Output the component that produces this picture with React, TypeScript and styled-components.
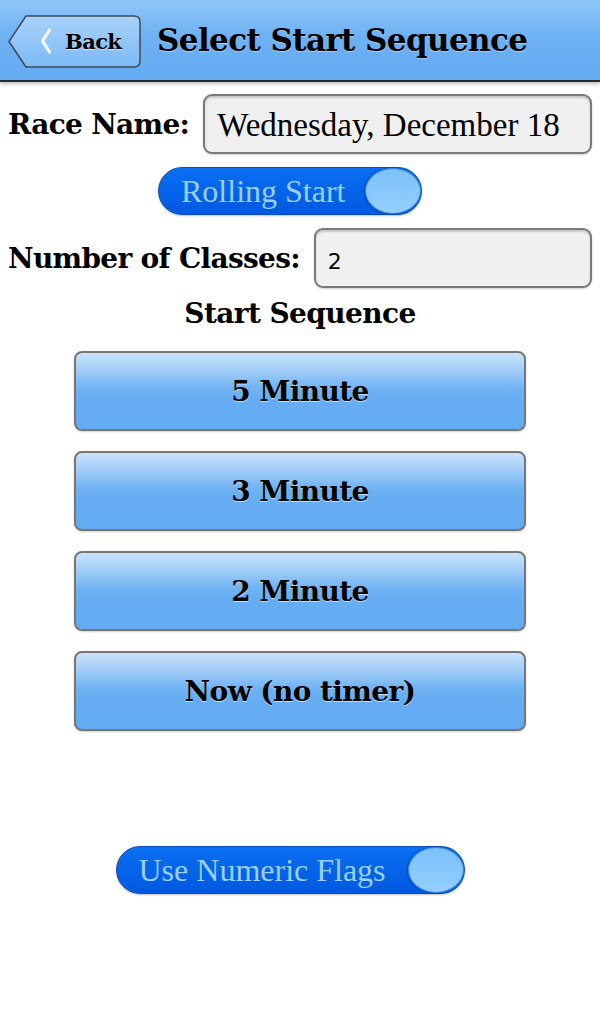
import React from "react";
import styled, { createGlobalStyle } from "styled-components";

const GlobalStyle = createGlobalStyle`
  html, body {
    margin: 0;
    padding: 0;
    background: #ffffff;
  }
  body {
    font-family: "DejaVu Serif", "Liberation Serif", serif;
    color: #000;
  }
`;

const Screen = styled.div`
  width: 600px;
  min-height: 1024px;
  background: #fff;
`;

const Header = styled.header`
  height: 80px;
  display: flex;
  align-items: center;
  gap: 16px;
  padding: 0 8px;
  background: linear-gradient(#8fc6f8 0%, #6eb1f3 45%, #63abf2 100%);
  border-bottom: 2px solid #2a2a2a;
  box-shadow: 0 2px 4px rgba(0, 0, 0, 0.25);
  position: relative;
`;

const BackButton = styled.button`
  position: relative;
  height: 53px;
  width: 133px;
  margin-top: 2px;
  border: none;
  background: none;
  padding: 0;
  cursor: pointer;
  display: flex;
  align-items: center;
`;

const BackFrame = styled.svg`
  position: absolute;
  left: 0;
  top: 0;
`;

const BackLabel = styled.span`
  position: relative;
  display: flex;
  align-items: center;
  gap: 13px;
  padding-left: 31px;
  font-family: "DejaVu Serif", serif;
  font-weight: bold;
  font-size: 21px;
  letter-spacing: -0.6px;
  color: #000;
  text-shadow: 0 1px 0 rgba(255, 255, 255, 0.5);
`;

const Title = styled.h1`
  margin: 0;
  font-size: 31px;
  font-weight: bold;
  letter-spacing: -0.6px;
  text-shadow: 0 1px 0 rgba(255, 255, 255, 0.4);
`;

const Body = styled.main`
  display: flex;
  flex-direction: column;
  padding: 12px 8px 0;
`;

const FieldRow = styled.div`
  display: flex;
  align-items: center;
  gap: 14px;
`;

const Label = styled.label`
  font-size: 28px;
  font-weight: bold;
  letter-spacing: -0.7px;
  white-space: nowrap;
`;

const TextBox = styled.div<{ $sans?: boolean }>`
  flex: 1;
  height: 60px;
  box-sizing: border-box;
  display: flex;
  align-items: center;
  padding: 0 12px;
  background: #f0f0f0;
  border: 2px solid #7a7a7a;
  border-radius: 9px;
  box-shadow: inset 0 2px 2px rgba(0, 0, 0, 0.18), 0 1px 2px rgba(0, 0, 0, 0.2);
  font-family: ${(p) => (p.$sans ? '"DejaVu Sans", sans-serif' : '"Liberation Serif", serif')};
  font-size: ${(p) => (p.$sans ? 22 : 33)}px;
  padding-top: ${(p) => (p.$sans ? 6 : 2)}px;
`;

const ToggleRow = styled.div<{ $top: number; $bottom: number }>`
  display: flex;
  justify-content: center;
  padding-right: 20px;
  margin: ${(p) => p.$top}px 0 ${(p) => p.$bottom}px;
`;

const Toggle = styled.div<{ $width: number }>`
  width: ${(p) => p.$width}px;
  height: 48px;
  box-sizing: border-box;
  display: flex;
  align-items: center;
  justify-content: space-between;
  padding-left: 22px;
  border-radius: 24px;
  background: linear-gradient(#0a6ff2, #0059e0);
  border: 1px solid #0a50b8;
  box-shadow: 0 1px 2px rgba(0, 0, 0, 0.25);
`;

const ToggleText = styled.span`
  font-family: "Liberation Serif", serif;
  font-size: 32px;
  color: #99d0ff;
  white-space: nowrap;
`;

const Knob = styled.span`
  width: 56px;
  height: 46px;
  border-radius: 50%;
  box-sizing: border-box;
  background: linear-gradient(#7cc1f9, #93cfff);
  border: 1px solid #3f86d6;
  box-shadow: -1px 0 2px rgba(0, 0, 0, 0.3);
`;

const SectionTitle = styled.h2`
  margin: 9px 0 21px;
  text-align: center;
  font-size: 28px;
  font-weight: bold;
  letter-spacing: -0.6px;
`;

const SequenceList = styled.div`
  display: flex;
  flex-direction: column;
  align-items: center;
  gap: 20px;
`;

const SequenceButton = styled.button`
  width: 452px;
  height: 80px;
  box-sizing: border-box;
  border: 2px solid #767676;
  border-radius: 8px;
  background: linear-gradient(#c9e3fc 0%, #9dcbf7 25%, #72b4f4 45%, #66adf2 60%, #63acf2 100%);
  box-shadow: 0 1px 2px rgba(0, 0, 0, 0.2);
  font-family: "DejaVu Serif", serif;
  font-weight: bold;
  font-size: 28px;
  letter-spacing: -0.6px;
  color: #000;
  text-shadow: 0 1px 0 rgba(255, 255, 255, 0.6);
  cursor: pointer;
`;

const BackShape = () => (
  <BackFrame width="133" height="53" viewBox="0 0 133 53">
    <defs>
      <linearGradient id="backGrad" x1="0" y1="0" x2="0" y2="1">
        <stop offset="0" stopColor="#a9d2fa" />
        <stop offset="1" stopColor="#7cbaf5" />
      </linearGradient>
    </defs>
    <path
      d="M1 26.5 L18 1 H126 Q132 1 132 7 V46 Q132 52 126 52 H18 Z"
      fill="url(#backGrad)"
      stroke="#3c4a5a"
      strokeWidth="1.5"
      strokeLinejoin="round"
    />
  </BackFrame>
);

const Chevron = () => (
  <svg width="13" height="28" viewBox="0 0 13 28">
    <path d="M10.5 3 L3.5 14 L10.5 25" fill="none" stroke="#f4f9ff" strokeWidth="3.2" strokeLinecap="round" />
  </svg>
);

const sequences = ["5 Minute", "3 Minute", "2 Minute", "Now (no timer)"];

export default function App() {
  return (
    <Screen>
      <GlobalStyle />
      <Header>
        <BackButton>
          <BackShape />
          <BackLabel>
            <Chevron />
            Back
          </BackLabel>
        </BackButton>
        <Title>Select Start Sequence</Title>
      </Header>
      <Body>
        <FieldRow>
          <Label>Race Name:</Label>
          <TextBox>Wednesday, December 18</TextBox>
        </FieldRow>
        <ToggleRow $top={13} $bottom={13}>
          <Toggle $width={264}>
            <ToggleText>Rolling Start</ToggleText>
            <Knob />
          </Toggle>
        </ToggleRow>
        <FieldRow>
          <Label>Number of Classes:</Label>
          <TextBox $sans>2</TextBox>
        </FieldRow>
        <SectionTitle>Start Sequence</SectionTitle>
        <SequenceList>
          {sequences.map((s) => (
            <SequenceButton key={s}>{s}</SequenceButton>
          ))}
        </SequenceList>
        <ToggleRow $top={115} $bottom={0}>
          <Toggle $width={349}>
            <ToggleText>Use Numeric Flags</ToggleText>
            <Knob />
          </Toggle>
        </ToggleRow>
      </Body>
    </Screen>
  );
}
